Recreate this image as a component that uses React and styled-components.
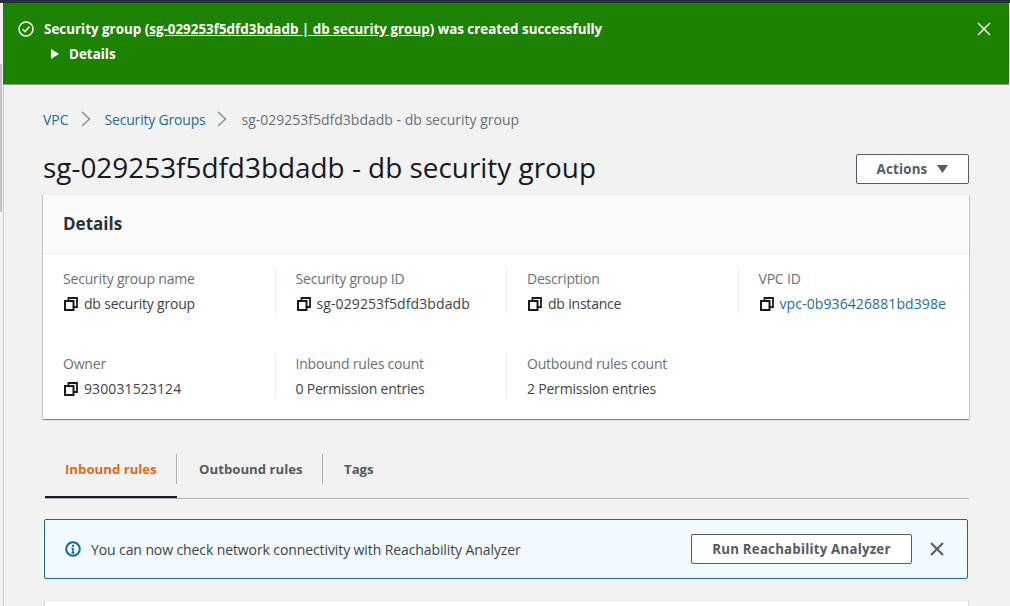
import React from 'react';
import styled, { createGlobalStyle } from 'styled-components';

const GlobalStyle = createGlobalStyle`
  html, body {
    margin: 0;
    padding: 0;
    height: 606px;
    overflow: hidden;
    background: #f2f2f2;
    font-family: "Open Sans", "Noto Sans", sans-serif;
    color: #16191f;
  }
  * { box-sizing: border-box; }
`;

const Page = styled.div`
  position: relative;
  width: 1010px;
  height: 606px;
  display: flex;
  flex-direction: column;
  overflow: hidden;
`;

const TopBar = styled.div`
  height: 3px;
  flex: none;
  background: #232f3e;
`;

const ScrollThumb = styled.div`
  position: absolute;
  left: 0;
  top: 64px;
  width: 2px;
  height: 148px;
  background: #c4c4c6;
`;

const Body = styled.div`
  flex: 1;
  margin-left: 3px;
  margin-right: 1px;
  background: #f2f2f2;
  min-height: 0;
  display: flex;
  flex-direction: column;
`;

const Banner = styled.div`
  height: 82px;
  flex: none;
  background: #1d8102;
  border-bottom: 1px solid #8f9f8a;
  color: #fff;
  display: flex;
  justify-content: space-between;
  padding: 17px 17px 0 15px;
`;

const BannerLeft = styled.div`
  display: flex;
  flex-direction: column;
  gap: 7px;
`;

const BannerRow = styled.div`
  display: flex;
  align-items: center;
  gap: 10px;
  font-size: 13.4px;
  font-weight: 700;
  line-height: 18px;
`;

const BannerLink = styled.span`
  text-decoration: underline;
`;

const BannerClose = styled.svg`
  margin-top: 1px;
`;

const DetailsRow = styled.div`
  display: flex;
  align-items: center;
  gap: 10px;
  margin-left: 33px;
  font-size: 13.4px;
  font-weight: 700;
  line-height: 18px;
`;

const Content = styled.div`
  flex: 1;
  border-left: 1px solid #c9c9c9;
  padding: 24px 40px 0 39px;
`;

const Breadcrumbs = styled.nav`
  display: flex;
  align-items: center;
  height: 20px;
  font-size: 14px;
`;

const Crumb = styled.span`
  color: ${({ $current }) => ($current ? '#687078' : '#1f6b9c')};
  letter-spacing: ${({ $tight }) => ($tight ? -0.2 : 0)}px;
`;

const CrumbSep = styled.svg`
  width: 10px;
  height: 16px;
  margin: 0 14px 0 12px;
`;

const TitleRow = styled.div`
  display: flex;
  justify-content: space-between;
  align-items: center;
  height: 36px;
  margin-top: 22px;
`;

const Title = styled.h1`
  margin: 0 0 3px;
  font-size: 27.9px;
  font-weight: 400;
  line-height: 33px;
  color: #16191f;
`;

const Button = styled.button`
  height: 30px;
  padding: 0;
  width: ${({ $w }) => $w}px;
  background: #fff;
  border: 1px solid #545b64;
  border-radius: 2px;
  color: #545b64;
  font-family: inherit;
  font-size: 13.3px;
  font-weight: 700;
  letter-spacing: 0.2px;
  display: flex;
  align-items: center;
  justify-content: center;
  gap: 10px;
`;

const Card = styled.section`
  margin-top: 7px;
  background: #fff;
  border-top: 1px solid #eaeded;
  box-shadow: 0 1px 1px 0 rgba(0, 28, 36, 0.3), 1px 1px 1px 0 rgba(0, 28, 36, 0.15),
    -1px 1px 1px 0 rgba(0, 28, 36, 0.15);
`;

const CardHeader = styled.div`
  height: 59px;
  padding: 0 20px 1px;
  display: flex;
  align-items: center;
  background: #fafafa;
  border-bottom: 1px solid #eaeded;
  font-size: 17px;
  font-weight: 700;
  color: #2b3038;
`;

const Grid = styled.div`
  display: grid;
  grid-template-columns: repeat(4, 231.5px);
  row-gap: 39px;
  padding: 14px 0 20px 0;
`;

const Field = styled.div`
  height: 46px;
  padding-left: 20px;
  border-left: ${({ $first }) => ($first ? '0' : '1px solid #eaeded')};
`;

const Label = styled.div`
  font-size: 14px;
  letter-spacing: -0.2px;
  line-height: 20px;
  color: #687078;
  margin-top: 1px;
`;

const Value = styled.div`
  display: flex;
  align-items: center;
  gap: 6px;
  margin-top: 5px;
  font-size: 14px;
  line-height: 20px;
  letter-spacing: ${({ $digits }) => ($digits ? 0.1 : -0.2)}px;
  color: #3d434a;
`;

const ValueLink = styled.span`
  color: #1f6b9c;
`;

const Copy = styled.svg`
  margin-left: 1px;
  flex: none;
`;

const Tabs = styled.div`
  margin: 35px 0 0 2px;
  height: 45px;
  display: flex;
  border-bottom: 1px solid #aab7b8;
`;

const Tab = styled.div`
  position: relative;
  height: 44px;
  width: ${({ $w }) => $w}px;
  padding-top: 5px;
  padding-left: ${({ $pad }) => $pad}px;
  font-size: 13.2px;
  line-height: 20px;
  font-weight: 700;
  color: ${({ $active }) => ($active ? '#dd6b26' : '#545b64')};
  border-bottom: ${({ $active }) => ($active ? '2px solid #16191f' : 'none')};

  &::after {
    content: '';
    display: ${({ $divider }) => ($divider ? 'block' : 'none')};
    position: absolute;
    right: 0;
    top: 0;
    height: 30px;
    width: 1px;
    background: #aab7b8;
  }
`;

const Notice = styled.div`
  margin: 20px 1px 0 1px;
  height: 60px;
  display: flex;
  align-items: center;
  background: #f1faff;
  border: 1px solid #1d6a85;
  border-radius: 2px;
  padding: 0 22px 0 20px;
`;

const NoticeText = styled.div`
  flex: 1;
  margin-left: 10px;
  font-size: 14px;
  letter-spacing: -0.1px;
  color: #3d434a;
`;

const CloseBtn = styled.svg`
  width: 16px;
  height: 16px;
  margin-left: 17px;
`;

const NextCard = styled.div`
  margin: 21px 0 0 1px;
  height: 30px;
  background: #fff;
  border-top: 1px solid #eaeded;
  border-left: 1px solid #d5dbdb;
  border-right: 1px solid #d5dbdb;
`;

const CopyIcon = () => (
  <Copy width="14" height="14" viewBox="0 0 14 14" fill="none" stroke="#16191f" strokeWidth="2">
    <rect x="1" y="4" width="8.5" height="9" />
    <path d="M4.5 4V1h8.5v9H9.5" strokeWidth="1.8" />
  </Copy>
);

const fields = [
  { label: 'Security group name', value: 'db security group', copy: true },
  { label: 'Security group ID', value: 'sg-029253f5dfd3bdadb', copy: true, digits: true },
  { label: 'Description', value: 'db instance', copy: true },
  { label: 'VPC ID', value: 'vpc-0b936426881bd398e', copy: true, link: true, digits: true },
  { label: 'Owner', value: '930031523124', copy: true, digits: true },
  { label: 'Inbound rules count', value: '0 Permission entries' },
  { label: 'Outbound rules count', value: '2 Permission entries' },
];

const Chevron = () => (
  <CrumbSep viewBox="0 0 10 16" fill="none" stroke="#879596" strokeWidth="1.6">
    <path d="M1 1l7.5 7L1 15" />
  </CrumbSep>
);

export default function App() {
  return (
    <Page>
      <GlobalStyle />
      <TopBar />
      <ScrollThumb />
      <Body>
        <Banner>
          <BannerLeft>
            <BannerRow>
              <svg width="16" height="16" viewBox="0 0 16 16" fill="none" stroke="#fff" strokeWidth="1.5">
                <circle cx="8" cy="8" r="7" />
                <path d="M4.6 8.2l2.4 2.4 4.4-4.8" />
              </svg>
              <span>
                Security group (<BannerLink>sg-029253f5dfd3bdadb | db security group</BannerLink>) was created successfully
              </span>
            </BannerRow>
            <DetailsRow>
              <svg width="8" height="10" viewBox="0 0 8 10" fill="#fff">
                <path d="M0 0l8 5-8 5z" />
              </svg>
              <span>Details</span>
            </DetailsRow>
          </BannerLeft>
          <BannerClose width="16" height="16" viewBox="0 0 16 16" fill="none" stroke="#e6f0e2" strokeWidth="1.6">
            <path d="M2 2l12 12M14 2L2 14" />
          </BannerClose>
        </Banner>
        <Content>
          <Breadcrumbs>
            <Crumb>VPC</Crumb>
            <Chevron />
            <Crumb $tight>Security Groups</Crumb>
            <Chevron />
            <Crumb $current>sg-029253f5dfd3bdadb - db security group</Crumb>
          </Breadcrumbs>
          <TitleRow>
            <Title>sg-029253f5dfd3bdadb - db security group</Title>
            <Button $w={113}>
              Actions
              <svg width="11" height="8" viewBox="0 0 11 8" fill="#545b64">
                <path d="M0 0h11L5.5 8z" />
              </svg>
            </Button>
          </TitleRow>
          <Card>
            <CardHeader>Details</CardHeader>
            <Grid>
              {fields.map((f, i) => (
                <Field key={f.label} $first={i % 4 === 0}>
                  <Label>{f.label}</Label>
                  <Value $digits={f.digits}>
                    {f.copy && <CopyIcon />}
                    {f.link ? <ValueLink>{f.value}</ValueLink> : f.value}
                  </Value>
                </Field>
              ))}
            </Grid>
          </Card>
          <Tabs>
            <Tab $active $divider $w={132} $pad={20}>Inbound rules</Tab>
            <Tab $divider $w={146} $pad={22}>Outbound rules</Tab>
            <Tab $pad={21} $w={80}>Tags</Tab>
          </Tabs>
          <Notice>
            <svg width="16" height="16" viewBox="0 0 16 16" fill="none">
              <circle cx="8" cy="8" r="6.8" stroke="#0f6a96" strokeWidth="2" />
              <path d="M8 7v5M6.5 7.5H8M6.5 12h3" stroke="#0f6a96" strokeWidth="1.6" />
              <rect x="7" y="3.8" width="2" height="2" fill="#0f6a96" />
            </svg>
            <NoticeText>You can now check network connectivity with Reachability Analyzer</NoticeText>
            <Button $w={221}>Run Reachability Analyzer</Button>
            <CloseBtn viewBox="0 0 16 16" fill="none" stroke="#545b64" strokeWidth="2">
              <path d="M2 2l12 12M14 2L2 14" />
            </CloseBtn>
          </Notice>
          <NextCard />
        </Content>
      </Body>
    </Page>
  );
}
